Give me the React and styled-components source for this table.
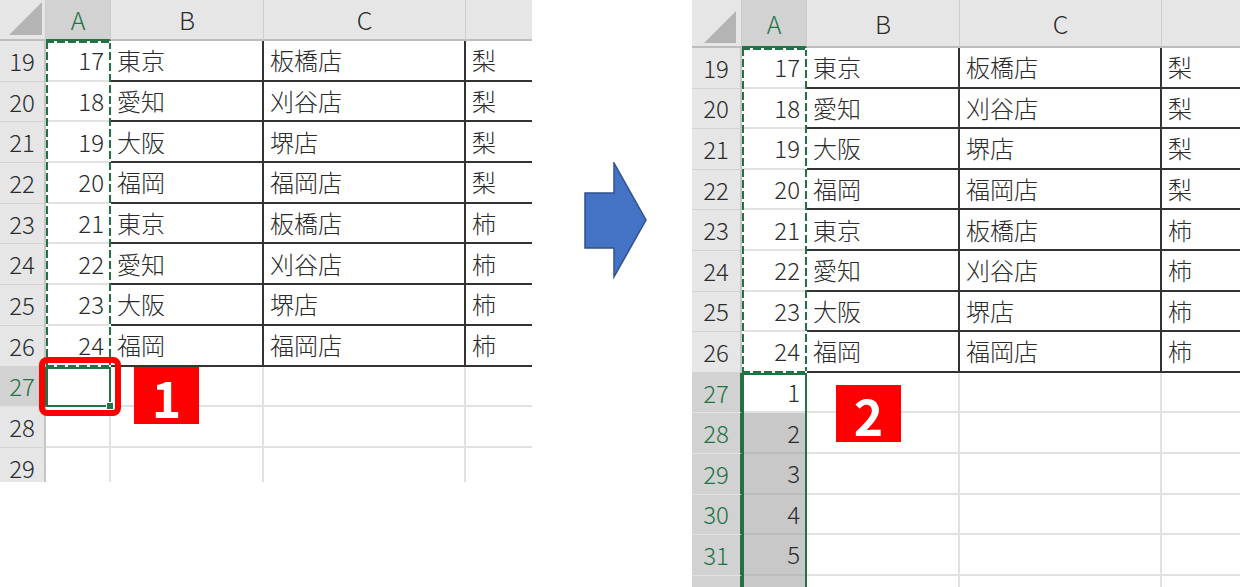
import styled, { createGlobalStyle } from 'styled-components'

const GREEN = '#217346'
const RED = '#ff0000'

const GlobalStyle = createGlobalStyle`
  * { box-sizing: border-box; }
  body {
    margin: 0;
    background: #fff;
    font-family: "Noto Sans CJK JP", "Noto Sans", sans-serif;
  }
`

const Page = styled.div`
  display: flex;
  align-items: flex-start;
  width: 1240px;
  height: 587px;
  overflow: hidden;
  background: #fff;
`

const SheetWrap = styled.div`
  position: relative;
  flex: none;
  width: ${p => p.$width}px;
  height: ${p => p.$height}px;
  overflow: hidden;
`

const Grid = styled.div`
  display: grid;
  grid-template-columns: ${p => p.$cols};
  grid-template-rows: ${p => p.$header}px;
  grid-auto-rows: ${p => p.$rowH}px;
  color: #2b2b2b;
  font-size: 24px;
  font-weight: 300;
  line-height: 1;
`

const Corner = styled.div`
  display: flex;
  align-items: flex-end;
  justify-content: flex-end;
  padding: 0 ${p => p.$padR}px ${p => p.$padB}px 0;
  background: #e6e6e6;
  border-right: 1px solid #cdcdcd;
  border-bottom: 2px solid #bdbdbd;
`

const ColHead = styled.div`
  display: flex;
  align-items: center;
  justify-content: center;
  font-size: 25px;
  background: ${p => (p.$sel ? '#d2d2d2' : '#e6e6e6')};
  color: ${p => (p.$sel ? GREEN : '#2b2b2b')};
  border-right: 1px solid #cdcdcd;
  border-bottom: 2px solid ${p => (p.$sel ? GREEN : '#bdbdbd')};
`

const RowHead = styled.div`
  display: flex;
  align-items: center;
  justify-content: center;
  background: ${p => (p.$sel ? '#d2d2d2' : '#e6e6e6')};
  color: ${p => (p.$sel ? GREEN : '#2b2b2b')};
  border-right: 2px solid ${p => (p.$sel ? GREEN : '#c6c6c6')};
  border-bottom: 1px solid ${p => (p.$sel ? '#e2e2e2' : '#d3d3d3')};
`

const Cell = styled.div`
  display: flex;
  align-items: center;
  justify-content: ${p => (p.$num ? 'flex-end' : 'flex-start')};
  padding: 0 5px 0 6px;
  white-space: nowrap;
  overflow: hidden;
  background: ${p => (p.$fill ? '#c8c8c8' : '#fff')};
  border-right: 2px solid ${p => (p.$edge ? '#333' : p.$fill ? '#bcbcbc' : '#e1e1e1')};
  border-bottom: 2px solid ${p => (p.$table ? '#333' : p.$fill ? '#bcbcbc' : '#e1e1e1')};
`

const dash = dir => `repeating-linear-gradient(${dir}, ${GREEN} 0 8px, #fff 8px 11px)`

const Marquee = styled.div`
  position: absolute;
  left: ${p => p.$x}px;
  top: ${p => p.$y}px;
  width: ${p => p.$w}px;
  height: ${p => p.$h}px;
  pointer-events: none;
  background:
    ${dash('90deg')} top left / 100% 2px no-repeat,
    ${dash('90deg')} bottom left / 100% 2px no-repeat,
    ${dash('180deg')} top left / 2px 100% no-repeat,
    ${dash('180deg')} top right / 2px 100% no-repeat;
`

const Selection = styled.div`
  position: absolute;
  left: ${p => p.$x}px;
  top: ${p => p.$y}px;
  width: ${p => p.$w}px;
  height: ${p => p.$h}px;
  border: 2px solid ${GREEN};
  pointer-events: none;
`

const FillHandle = styled.span`
  position: absolute;
  right: -5px;
  bottom: -5px;
  width: 8px;
  height: 8px;
  background: ${GREEN};
  border: 1px solid #fff;
`

const Callout = styled.div`
  position: absolute;
  left: 39px;
  top: 357px;
  width: 82px;
  height: 59px;
  border: 6px solid ${RED};
  border-radius: 8px;
`

const Badge = styled.div`
  position: absolute;
  left: ${p => p.$x}px;
  top: ${p => p.$y}px;
  width: 65px;
  height: 57px;
  display: flex;
  align-items: center;
  justify-content: center;
  background: ${RED};
  color: #fff;
  font-family: "Noto Sans CJK JP", "Noto Sans", sans-serif;
  font-weight: 700;
  font-size: 50px;
  line-height: 1;
`

const ArrowSlot = styled.div`
  flex: none;
  width: 160px;
  padding: 162px 0 0 52px;
`

const data = [
  [17, '東京', '板橋店', '梨'],
  [18, '愛知', '刈谷店', '梨'],
  [19, '大阪', '堺店', '梨'],
  [20, '福岡', '福岡店', '梨'],
  [21, '東京', '板橋店', '柿'],
  [22, '愛知', '刈谷店', '柿'],
  [23, '大阪', '堺店', '柿'],
  [24, '福岡', '福岡店', '柿'],
]

const Triangle = ({ size }) => (
  <svg width={size} height={size} viewBox="0 0 32 32">
    <polygon points="32,0 32,32 0,32" fill="#b4b4b4" />
  </svg>
)

const Sheet = ({ cfg, extra, children }) => {
  const { cols, header, rowH, width, height, rowHeadW, corner } = cfg
  const tableRows = data.map((r, i) => ({ n: 19 + i, vals: r, table: true }))
  const rows = [...tableRows, ...extra]
  return (
    <SheetWrap $width={width} $height={height}>
      <Grid $cols={cols.map(c => c + 'px').join(' ')} $header={header} $rowH={rowH}>
        <Corner $padR={corner.r} $padB={corner.b}>
          <Triangle size={corner.size} />
        </Corner>
        <ColHead $sel>A</ColHead>
        <ColHead>B</ColHead>
        <ColHead>C</ColHead>
        <ColHead />
        {rows.map(row => [
          <RowHead key={row.n + 'h'} $sel={row.sel}>{row.n}</RowHead>,
          <Cell key={row.n + 'a'} $num $edge={row.table} $fill={row.fill}>
            {row.vals[0]}
          </Cell>,
          <Cell key={row.n + 'b'} $edge={row.table} $table={row.table}>{row.vals[1]}</Cell>,
          <Cell key={row.n + 'c'} $edge={row.table} $table={row.table}>{row.vals[2]}</Cell>,
          <Cell key={row.n + 'd'} $table={row.table}>{row.vals[3]}</Cell>,
        ])}
      </Grid>
      {children({ x: rowHeadW, w: cols[1], top: header, rowH })}
    </SheetWrap>
  )
}

const leftCfg = {
  cols: [46, 65, 153, 202, 80],
  header: 41,
  rowH: 40.7,
  width: 532,
  height: 482,
  rowHeadW: 46,
  corner: { size: 33, r: 3, b: 4 },
}

const rightCfg = {
  cols: [50, 65, 153, 202, 90],
  header: 48,
  rowH: 40.6,
  width: 548,
  height: 587,
  rowHeadW: 50,
  corner: { size: 32, r: 5, b: 3 },
}

const leftExtra = [
  { n: 27, vals: ['', '', '', ''], sel: true },
  { n: 28, vals: ['', '', '', ''] },
  { n: 29, vals: ['', '', '', ''] },
]

const rightExtra = [27, 28, 29, 30, 31, 32].map((n, i) => ({
  n,
  vals: [i + 1, '', '', ''],
  sel: true,
  fill: i > 0,
}))

const Arrow = () => (
  <svg width="64" height="118" viewBox="0 0 64 118">
    <polygon
      points="1,31 30,31 30,1 62,58 30,115 30,86 1,86"
      fill="#4472c4"
      stroke="#2f528f"
      strokeWidth="1.5"
    />
  </svg>
)

export default function App() {
  return (
    <>
      <GlobalStyle />
      <Page>
        <Sheet cfg={leftCfg} extra={leftExtra}>
          {({ x, w, top, rowH }) => (
            <>
              <Selection $x={x} $y={top + rowH * 8} $w={w} $h={rowH}>
                <FillHandle />
              </Selection>
              <Marquee $x={x} $y={top} $w={w} $h={rowH * 8} />
              <Callout />
              <Badge $x={134} $y={367}>1</Badge>
            </>
          )}
        </Sheet>
        <ArrowSlot>
          <Arrow />
        </ArrowSlot>
        <Sheet cfg={rightCfg} extra={rightExtra}>
          {({ x, w, top, rowH }) => (
            <>
              <Selection $x={x} $y={top + rowH * 8} $w={w} $h={rowH * 7} />
              <Marquee $x={x} $y={top} $w={w} $h={rowH * 8} />
              <Badge $x={144} $y={385}>2</Badge>
            </>
          )}
        </Sheet>
      </Page>
    </>
  )
}
